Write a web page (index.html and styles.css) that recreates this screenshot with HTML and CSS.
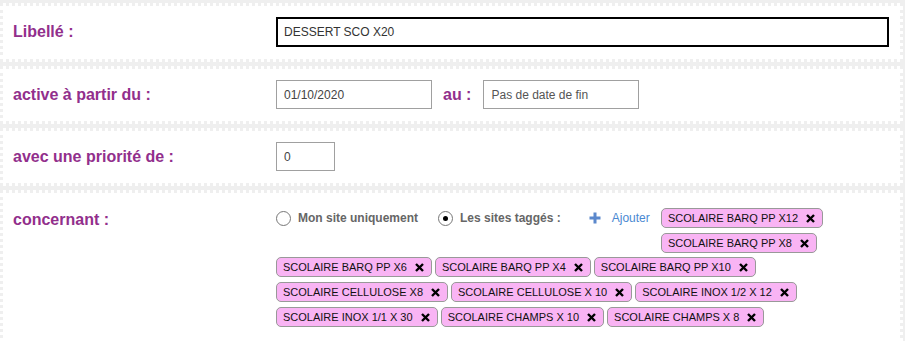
FILE: index.html
```html
<!DOCTYPE html>
<html lang="fr">
<head>
    <meta charset="UTF-8">
    <title>Promotion</title>
    <link rel="stylesheet" href="styles.css">
</head>
<body>

    <!-- Libellé -->
    <div class="panel">
        <label class="field-label">Libellé :</label>
        <div class="field">
            <input class="input input-wide" type="text" value="DESSERT SCO X20">
        </div>
    </div>

    <!-- Période -->
    <div class="panel">
        <label class="field-label">active à partir du :</label>
        <div class="field">
            <input class="input input-date" type="text" value="01/10/2020">
            <span class="inline-label">au :</span>
            <input class="input input-date" type="text" placeholder="Pas de date de fin">
        </div>
    </div>

    <!-- Priorité -->
    <div class="panel">
        <label class="field-label">avec une priorité de :</label>
        <div class="field">
            <input class="input input-small" type="text" value="0">
        </div>
    </div>

    <!-- Sites -->
    <div class="panel panel-top">
        <label class="field-label">concernant :</label>
        <div class="field field-stack">
            <div class="sites-head">
                <div class="choices">
                    <span class="choice"><span class="radio"></span>Mon site uniquement</span>
                    <span class="choice"><span class="radio checked"></span>Les sites taggés :</span>
                    <a class="add-link" href="#">
                        <svg width="12" height="12" viewBox="0 0 12 12"><path d="M6 0.5v11M0.5 6h11" stroke="#5b88cc" stroke-width="3"/></svg>
                        Ajouter
                    </a>
                </div>
                <div class="tag-stack">
                    <span class="tag">SCOLAIRE BARQ PP X12<svg class="tag-x" width="9" height="9" viewBox="0 0 9 9"><path d="M1 1l7 7M8 1l-7 7" stroke="#000" stroke-width="2.4"/></svg></span>
                    <span class="tag">SCOLAIRE BARQ PP X8<svg class="tag-x" width="9" height="9" viewBox="0 0 9 9"><path d="M1 1l7 7M8 1l-7 7" stroke="#000" stroke-width="2.4"/></svg></span>
                </div>
            </div>
            <div class="tag-list">
                <span class="tag">SCOLAIRE BARQ PP X6<svg class="tag-x" width="9" height="9" viewBox="0 0 9 9"><path d="M1 1l7 7M8 1l-7 7" stroke="#000" stroke-width="2.4"/></svg></span>
                <span class="tag">SCOLAIRE BARQ PP X4<svg class="tag-x" width="9" height="9" viewBox="0 0 9 9"><path d="M1 1l7 7M8 1l-7 7" stroke="#000" stroke-width="2.4"/></svg></span>
                <span class="tag">SCOLAIRE BARQ PP X10<svg class="tag-x" width="9" height="9" viewBox="0 0 9 9"><path d="M1 1l7 7M8 1l-7 7" stroke="#000" stroke-width="2.4"/></svg></span>
                <span class="tag">SCOLAIRE CELLULOSE X8<svg class="tag-x" width="9" height="9" viewBox="0 0 9 9"><path d="M1 1l7 7M8 1l-7 7" stroke="#000" stroke-width="2.4"/></svg></span>
                <span class="tag">SCOLAIRE CELLULOSE X 10<svg class="tag-x" width="9" height="9" viewBox="0 0 9 9"><path d="M1 1l7 7M8 1l-7 7" stroke="#000" stroke-width="2.4"/></svg></span>
                <span class="tag">SCOLAIRE INOX 1/2 X 12<svg class="tag-x" width="9" height="9" viewBox="0 0 9 9"><path d="M1 1l7 7M8 1l-7 7" stroke="#000" stroke-width="2.4"/></svg></span>
                <span class="tag">SCOLAIRE INOX 1/1 X 30<svg class="tag-x" width="9" height="9" viewBox="0 0 9 9"><path d="M1 1l7 7M8 1l-7 7" stroke="#000" stroke-width="2.4"/></svg></span>
                <span class="tag">SCOLAIRE CHAMPS X 10<svg class="tag-x" width="9" height="9" viewBox="0 0 9 9"><path d="M1 1l7 7M8 1l-7 7" stroke="#000" stroke-width="2.4"/></svg></span>
                <span class="tag">SCOLAIRE CHAMPS X 8<svg class="tag-x" width="9" height="9" viewBox="0 0 9 9"><path d="M1 1l7 7M8 1l-7 7" stroke="#000" stroke-width="2.4"/></svg></span>
            </div>
        </div>
    </div>

</body>
</html>
```

FILE: styles.css
```css
/* Theme */
:root {
    --page-bg: #efefef;
    --panel-bg: #ffffff;
    --label-color: #922f8c;
    --text-muted: #666666;
    --link-color: #4a89d2;
    --tag-bg: #f9b4f4;
    --font-family: "Liberation Sans", Arial, sans-serif;
}

* {
    margin: 0;
    padding: 0;
    box-sizing: border-box;
}

body {
    background-color: var(--page-bg);
    font-family: var(--font-family);
    padding: 3px 2px 0 0;
    overflow: hidden;
}

/* Row panels with dotted edge */
.panel {
    display: flex;
    align-items: center;
    background-color: var(--panel-bg);
    border: 3px dotted var(--page-bg);
    padding: 11px 11px 12px 10px;
    margin-bottom: 4px;
}

.panel-top {
    align-items: flex-start;
    padding-top: 15px;
    padding-bottom: 20px;
}

.field-label {
    flex: none;
    width: 263px;
    font-size: 16px;
    font-weight: bold;
    color: var(--label-color);
}

.panel-top .field-label {
    padding-top: 3px;
}

.field {
    flex: 1;
    display: flex;
    align-items: center;
}

.field-stack {
    flex-direction: column;
    align-items: stretch;
    gap: 4px;
}

/* Inputs */
.input {
    font-family: var(--font-family);
    font-size: 12px;
    color: #444;
    height: 29px;
    border: 1px solid #a0a0a0;
    padding: 0 7px;
    background: #fff;
    outline: none;
}

.input::placeholder {
    color: #555;
}

.input-wide {
    width: 100%;
    height: 30px;
    border: 2px solid #000;
    padding: 0 6px;
    color: #333;
}

.input-date {
    width: 156px;
}

.input-small {
    width: 59px;
}

.inline-label {
    font-size: 16px;
    font-weight: bold;
    color: var(--label-color);
    margin: 0 12px 0 11px;
}

/* Site choice */
.sites-head {
    display: flex;
    align-items: flex-start;
}

.choices {
    display: flex;
    align-items: center;
    height: 20px;
    width: 385px;
}

.choice {
    display: flex;
    align-items: center;
    font-size: 12px;
    font-weight: bold;
    color: var(--text-muted);
    margin-right: 20px;
}

.radio {
    width: 15px;
    height: 15px;
    border: 1px solid #777;
    border-radius: 50%;
    margin-right: 7px;
    position: relative;
}

.radio.checked::after {
    content: '';
    position: absolute;
    top: 4px;
    left: 4px;
    width: 5px;
    height: 5px;
    border-radius: 50%;
    background-color: #000;
}

.add-link {
    display: flex;
    align-items: center;
    gap: 11px;
    margin-left: 8px;
    font-size: 12px;
    color: var(--link-color);
    text-decoration: none;
}

/* Tags */
.tag-stack {
    display: flex;
    flex-direction: column;
    align-items: flex-start;
    gap: 5px;
}

.tag-list {
    display: flex;
    flex-wrap: wrap;
    gap: 5px 3px;
}

.tag {
    display: inline-flex;
    align-items: center;
    height: 20px;
    padding: 0 7px 0 6px;
    background-color: var(--tag-bg);
    border: 1px solid #999;
    border-radius: 5px;
    font-size: 11px;
    color: #111;
    white-space: nowrap;
}

.tag-x {
    margin-left: 8px;
}
```
